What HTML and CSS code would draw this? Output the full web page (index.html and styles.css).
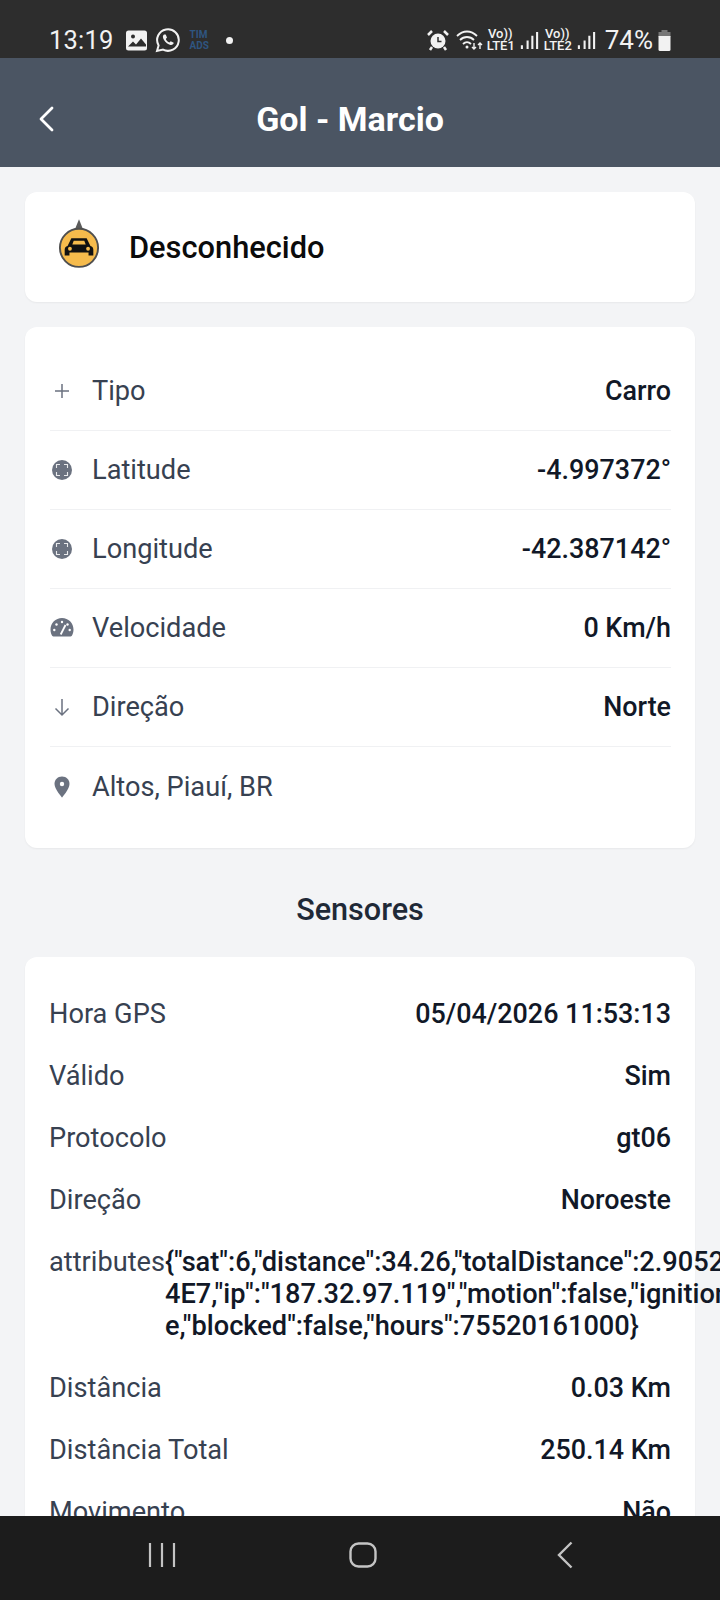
FILE: index.html
```html
<!DOCTYPE html>
<html lang="pt">
<head>
<meta charset="utf-8">
<title>Gol - Marcio</title>
<link rel="stylesheet" href="styles.css">
</head>
<body>
<div class="phone">
  <div class="statusbar">
    <div class="status-left">
      <span class="clock">13:19</span>
      <svg class="ic-gallery" viewBox="0 0 22 20"><rect width="21" height="20" rx="2.5" fill="#f2f2f2"/><circle cx="7" cy="6" r="2" fill="#2d2d2d"/><path d="M2 16l5-5 3 3 5-6 5 6v2H2z" fill="#2d2d2d"/></svg>
      <svg class="ic-wa" viewBox="0 0 26 26"><path d="M2 24l1.6-5.6A10.8 10.8 0 1 1 8 22.600z" fill="none" stroke="#f2f2f2" stroke-width="2"/><path d="M9 7.500c-1.500 1-1.500 3 0 5.500s4 4.500 6.500 5c1.800.3 3-.8 3.200-2.200l-3-1.500-1.200 1.300c-1.600-.6-3-2-3.700-3.700l1.200-1.300-1.300-3z" fill="#f2f2f2"/></svg>
      <span class="tim">TIM<br>ADS</span>
      <span class="dot"></span>
    </div>
    <div class="status-right">
      <svg class="ic-alarm" viewBox="0 0 22 22"><circle cx="11" cy="12" r="7.500" fill="#f2f2f2"/><path d="M11 8v4.500h3.500" fill="none" stroke="#2d2d2d" stroke-width="1.500"/><path d="M1 6l4-4M21 6l-4-4M5 18l-2 3M17 18l2 3" stroke="#f2f2f2" stroke-width="2.500" fill="none"/></svg>
      <svg class="ic-wifi" viewBox="0 0 28 22"><path d="M1 7c6-6 14-6 20 0M4 11c4-4 10-4 14 0M7 15c2.500-2.500 5.500-2.500 8 0" fill="none" stroke="#f2f2f2" stroke-width="1.800"/><circle cx="11" cy="18" r="1.500" fill="#f2f2f2"/><path d="M18 14v6M16 18l2 2 2-2M24 20v-6M22 16l2-2 2 2" fill="none" stroke="#f2f2f2" stroke-width="1.400"/></svg>
      <span class="volte">Vo))<br>LTE1</span>
      <svg class="ic-signal" viewBox="0 0 20 20"><path d="M2 15v4M8 10v9M13 5v14M18 1v18" stroke="#f2f2f2" stroke-width="2.200"/></svg>
      <span class="volte">Vo))<br>LTE2</span>
      <svg class="ic-signal" viewBox="0 0 20 20"><path d="M2 15v4M8 10v9M13 5v14M18 1v18" stroke="#f2f2f2" stroke-width="2.200"/></svg>
      <span class="battery-text">74%</span>
      <svg class="ic-battery" viewBox="0 0 14 21"><path d="M4 0h6v2h3v5H1V2h3z" fill="#777"/><path d="M1 6h12v13.500a1.500 1.500 0 0 1-1.500 1.500h-9A1.500 1.500 0 0 1 1 19.500z" fill="#f2f2f2"/></svg>
    </div>
  </div>

  <header class="appbar">
    <svg class="back" viewBox="0 0 18 28"><path d="M15 3L4 14l11 11" fill="none" stroke="#fff" stroke-width="2.800" stroke-linecap="round" stroke-linejoin="round"/></svg>
    <h1 class="title">Gol - Marcio</h1>
  </header>

  <main class="content">
    <section class="card status-card">
      <svg class="marker" viewBox="0 0 44 52">
        <path d="M22 0l4 10h-8z" fill="#5b5b5b"/>
        <circle cx="22" cy="30" r="20" fill="#f6bb4c" stroke="#4f4f4f" stroke-width="2"/>
        <path d="M14 20h16l4 8c2 .5 3 2 3 4v6h-5v-3H12v3H7v-6c0-2 1-3.500 3-4z" fill="#111"/>
        <path d="M16.500 22.500h11l1.500 4H15z" fill="#f6bb4c"/>
        <circle cx="12.500" cy="31" r="2" fill="#f6bb4c"/>
        <circle cx="31.500" cy="31" r="2" fill="#f6bb4c"/>
      </svg>
      <span class="status-label">Desconhecido</span>
    </section>

    <section class="card info-card">
      <div class="info-row">
        <svg class="ri" viewBox="0 0 24 24"><path d="M12 5v14M5 12h14" stroke="#6b7280" stroke-width="1.500" fill="none"/></svg>
        <span class="label">Tipo</span><span class="value">Carro</span>
      </div>
      <div class="info-row">
        <svg class="ri" viewBox="0 0 24 24"><circle cx="12" cy="12" r="10" fill="#6b7280"/><path d="M10 6.500H6.500V10M14 6.500h3.500V10M10 17.500H6.500V14M14 17.500h3.500V14" stroke="#fff" stroke-opacity=".85" stroke-width="1.100" fill="none"/></svg>
        <span class="label">Latitude</span><span class="value">-4.997372°</span>
      </div>
      <div class="info-row">
        <svg class="ri" viewBox="0 0 24 24"><circle cx="12" cy="12" r="10" fill="#6b7280"/><path d="M10 6.500H6.500V10M14 6.500h3.500V10M10 17.500H6.500V14M14 17.500h3.500V14" stroke="#fff" stroke-opacity=".85" stroke-width="1.100" fill="none"/></svg>
        <span class="label">Longitude</span><span class="value">-42.387142°</span>
      </div>
      <div class="info-row">
        <svg class="ri" viewBox="0 0 24 24"><path d="M12 2C5.600 2 .5 7 .5 13.500c0 2.300.6 4.300 1.500 6 .4.8 1.200 1 2 1h16c.8 0 1.600-.2 2-1 .9-1.700 1.500-3.700 1.500-6C23.500 7 18.400 2 12 2z" fill="#6b7280"/><path d="M10.700 18.500L15.500 9" stroke="#fff" stroke-width="1.800"/><circle cx="12" cy="6" r="1.200" fill="#fff"/><circle cx="6.500" cy="8.500" r="1.200" fill="#fff"/><circle cx="4.300" cy="14" r="1.200" fill="#fff"/><circle cx="19.700" cy="14" r="1.200" fill="#fff"/><circle cx="17.500" cy="8.500" r="1.200" fill="#fff"/></svg>
        <span class="label">Velocidade</span><span class="value">0 Km/h</span>
      </div>
      <div class="info-row">
        <svg class="ri" viewBox="0 0 24 24"><path d="M12 4v16M5.500 13.500L12 20l6.500-6.500" stroke="#6b7280" stroke-width="1.500" fill="none"/></svg>
        <span class="label">Direção</span><span class="value">Norte</span>
      </div>
      <div class="info-row">
        <svg class="ri" viewBox="0 0 24 24"><path d="M12 1.500c-4.500 0-7.500 3.300-7.500 7.500 0 5 7.500 13.500 7.500 13.500S19.500 14 19.500 9c0-4.200-3-7.500-7.500-7.500z" fill="#6b7280"/><circle cx="12" cy="9" r="2.200" fill="#fff"/></svg>
        <span class="label">Altos, Piauí, BR</span>
      </div>
    </section>

    <h2 class="section-title">Sensores</h2>

    <section class="card sensors-card">
      <div class="sensor-row"><span class="label">Hora GPS</span><span class="value">05/04/2026 11:53:13</span></div>
      <div class="sensor-row"><span class="label">Válido</span><span class="value">Sim</span></div>
      <div class="sensor-row"><span class="label">Protocolo</span><span class="value">gt06</span></div>
      <div class="sensor-row"><span class="label">Direção</span><span class="value">Noroeste</span></div>
      <div class="sensor-row attr-row"><span class="label">attributes</span><span class="value attr-value">{"sat":6,"distance":34.26,"totalDistance":2.9052<br>4E7,"ip":"187.32.97.119","motion":false,"ignition":fals<br>e,"blocked":false,"hours":75520161000}</span></div>
      <div class="sensor-row"><span class="label">Distância</span><span class="value">0.03 Km</span></div>
      <div class="sensor-row"><span class="label">Distância Total</span><span class="value">250.14 Km</span></div>
      <div class="sensor-row"><span class="label">Movimento</span><span class="value">Não</span></div>
    </section>
  </main>

  <nav class="navbar">
    <svg class="nav-recent" viewBox="0 0 28 26"><path d="M2 1v24M14 1v24M26 1v24" stroke="#c4c4c4" stroke-width="2.200" fill="none"/></svg>
    <svg class="nav-home" viewBox="0 0 28 26"><rect x="1.500" y="1.500" width="25" height="23" rx="8" fill="none" stroke="#c4c4c4" stroke-width="2.400"/></svg>
    <svg class="nav-back" viewBox="0 0 18 28"><path d="M15.500 1.500L3 14l12.500 12.500" fill="none" stroke="#c4c4c4" stroke-width="2.400"/></svg>
  </nav>
</div>
</body>
</html>
```

FILE: styles.css
```css
* { box-sizing: border-box; margin: 0; padding: 0; }
html, body { width: 720px; height: 1600px; overflow: hidden; }
body { font-family: Roboto, "Liberation Sans", sans-serif; background: #f3f4f6; }
.phone { display: flex; flex-direction: column; width: 720px; height: 1600px; }

.statusbar {
  flex: 0 0 58px; background: #2d2d2d; color: #f2f2f2;
  display: flex; justify-content: space-between; align-items: center;
  padding: 22px 48px 0 49px;
}
.status-left, .status-right { display: flex; align-items: center; height: 30px; }
.clock { font-size: 25.500px; letter-spacing: .2px; margin-right: 12px; }
.ic-gallery { width: 22px; height: 21px; margin-right: 7px; }
.ic-wa { width: 26px; height: 26px; margin-right: 9px; }
.tim { font-size: 10px; line-height: 11px; font-weight: 700; color: #2f5580; width: 20px; margin-right: 16px; }
.dot { width: 7px; height: 7px; border-radius: 50%; background: #f2f2f2; }
.ic-alarm { width: 22px; height: 22px; margin-right: 7px; }
.ic-wifi { width: 28px; height: 22px; margin-right: 3px; }
.volte { font-size: 13px; line-height: 12px; font-weight: 500; text-align: center; width: 27px; }
.ic-signal { width: 19px; height: 19px; margin: 0 5px 0 6px; }
.battery-text { font-size: 26px; margin-left: 4px; }
.ic-battery { width: 15px; height: 21px; margin-left: 4px; }

.appbar {
  flex: 0 0 109px; background: #4b5563; position: relative;
  display: flex; align-items: center; justify-content: center;
  padding: 13px 20px 0 0;
}
.back { position: absolute; left: 37px; top: 47px; width: 18px; height: 28px; }
.title { font-size: 34px; line-height: 40px; font-weight: 700; color: #fff; }

.content { flex: 1 1 auto; min-height: 0; overflow: hidden; padding: 25px 25px 0; display: flex; flex-direction: column; }
.card { flex: none; background: #fff; border-radius: 12px; box-shadow: 0 1px 2px rgba(0,0,0,.05); }

.status-card { height: 110px; display: flex; align-items: center; padding-left: 33px; margin-bottom: 25px; }
.marker { width: 42px; height: 50px; margin-right: 29px; margin-top: -6px; }
.status-label { font-size: 30.800px; font-weight: 500; color: #0b0b0b; }

.info-card { padding: 25px 24px 22px 25px; margin-bottom: 45px; }
.info-row {
  display: flex; align-items: center; height: 79px;
  border-bottom: 1px solid #f0f1f3;
}
.info-row:last-child { border-bottom: 0; }
.ri { width: 24px; height: 24px; margin-right: 18px; flex: none; }
.label { color: #374151; font-size: 27.200px; white-space: nowrap; }
.value { margin-left: auto; color: #111827; font-size: 26.900px; font-weight: 500; white-space: nowrap; }

.section-title { flex: none; font-size: 30.600px; line-height: 34px; font-weight: 500; color: #1f2937; text-align: center; margin-bottom: 30px; }

.sensors-card { padding: 26px 24px 0; }
.sensor-row { display: flex; align-items: center; height: 62px; }
.attr-row { align-items: flex-start; height: auto; padding: 15px 0; }
.attr-value { margin-left: 0; line-height: 32px; font-size: 27.200px; }
.attr-row .label { line-height: 32px; }

.navbar {
  flex: 0 0 84px; background: #1c1c1c; position: relative;
  display: flex; align-items: center;
}
.nav-recent { position: absolute; left: 148px; top: 26px; width: 28px; height: 26px; }
.nav-home { position: absolute; left: 349px; top: 26px; width: 28px; height: 26px; }
.nav-back { position: absolute; left: 556px; top: 25px; width: 18px; height: 28px; }
```
